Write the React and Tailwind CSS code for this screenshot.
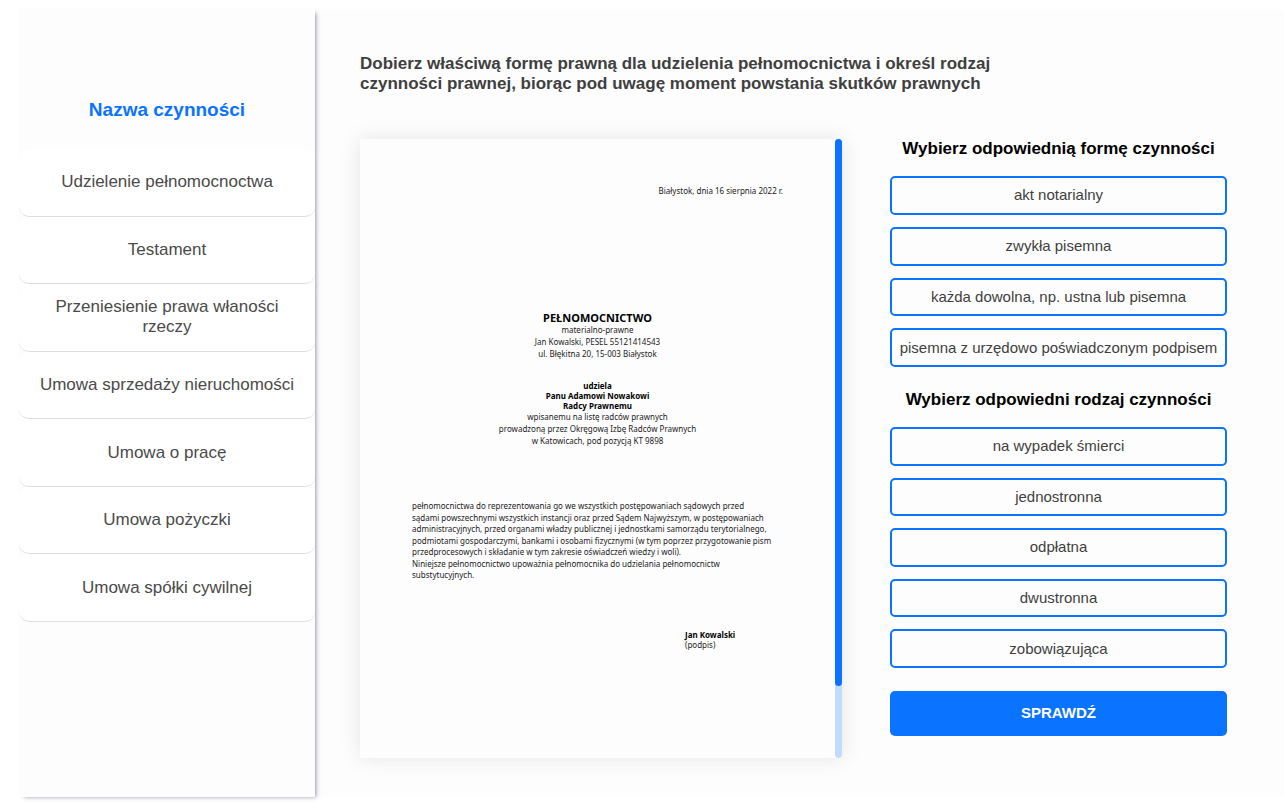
import React, { useState } from 'react'

const activities = [
  'Udzielenie pełnomocnoctwa',
  'Testament',
  'Przeniesienie prawa właności rzeczy',
  'Umowa sprzedaży nieruchomości',
  'Umowa o pracę',
  'Umowa pożyczki',
  'Umowa spółki cywilnej',
]

const forms = [
  'akt notarialny',
  'zwykła pisemna',
  'każda dowolna, np. ustna lub pisemna',
  'pisemna z urzędowo poświadczonym podpisem',
]

const kinds = ['na wypadek śmierci', 'jednostronna', 'odpłatna', 'dwustronna', 'zobowiązująca']

const documentBody = [
  'pełnomocnictwa do reprezentowania go we wszystkich postępowaniach sądowych przed',
  'sądami powszechnymi wszystkich instancji oraz przed Sądem Najwyższym, w postępowaniach',
  'administracyjnych, przed organami władzy publicznej i jednostkami samorządu terytorialnego,',
  'podmiotami gospodarczymi, bankami i osobami fizycznymi (w tym poprzez przygotowanie pism',
  'przedprocesowych i składanie w tym zakresie oświadczeń wiedzy i woli).',
  'Niniejsze pełnomocnictwo upoważnia pełnomocnika do udzielania pełnomocnictw',
  'substytucyjnych.',
]

function Sidebar() {
  return (
    <aside className="z-10 w-[296px] shrink-0 bg-[#fdfdfd] shadow-[3px_2px_4px_-2px_rgba(50,50,80,0.5)]">
      <h2 className="flex h-[140px] items-end justify-center pb-[25px] text-[19px] leading-7 font-bold text-[#0a73ff]">
        Nazwa czynności
      </h2>
      <nav className="flex h-[473px] flex-col">
        {activities.map((name) => (
          <button
            key={name}
            className="flex-1 cursor-pointer rounded-[10px] border-b border-[#dedede] bg-white px-5 text-[17px] leading-5 text-[#4a4a4a]"
          >
            {name}
          </button>
        ))}
      </nav>
    </aside>
  )
}

function Document() {
  const [progress, setProgress] = useState(0)

  const handleScroll = (e) => {
    const { scrollTop, scrollHeight, clientHeight } = e.currentTarget
    setProgress(scrollTop / (scrollHeight - clientHeight))
  }

  return (
    <div className="flex h-[619px] min-w-0 flex-1 bg-[#fdfdfd] shadow-[0_0_20px_rgba(0,0,0,0.1)]">
      <div
        tabIndex={0}
        onScroll={handleScroll}
        className="min-w-0 flex-1 overflow-x-hidden overflow-y-scroll outline-none [scrollbar-width:none]"
      >
        <article className="h-[700px] px-[52px] pt-[46px] font-['Noto_Sans',sans-serif] text-[8px] leading-3 text-[#222]">
          <p className="text-right">Białystok, dnia 16 sierpnia 2022 r.</p>

          <div className="mt-[115px] text-center">
            <h3 className="text-[11px] leading-3 font-bold text-black">PEŁNOMOCNICTWO</h3>
            <p>materialno-prawne</p>
            <p>Jan Kowalski, PESEL 55121414543</p>
            <p>ul. Błękitna 20, 15-003 Białystok</p>
          </div>

          <div className="mt-[21px] text-center">
            <div className="leading-[10px] font-bold text-black">
              <p>udziela</p>
              <p>Panu Adamowi Nowakowi</p>
              <p>Radcy Prawnemu</p>
            </div>
            <p>wpisanemu na listę radców prawnych</p>
            <p>prowadzoną przez Okręgową Izbę Radców Prawnych</p>
            <p>w Katowicach, pod pozycją KT 9898</p>
          </div>

          <div className="mt-[53px] flex h-20 flex-col justify-between leading-[11px] whitespace-nowrap">
            {documentBody.map((line) => (
              <p key={line}>{line}</p>
            ))}
          </div>

          <div className="mt-[50px] ml-auto w-[98px] leading-[10px]">
            <p className="font-bold text-black">Jan Kowalski</p>
            <p>(podpis)</p>
          </div>
        </article>
      </div>
      <div className="w-[7px] shrink-0 rounded-full bg-[#c1dcff]">
        <div
          className="h-[547px] rounded-full bg-[#0a73ff]"
          style={{ transform: `translateY(${progress * 72}px)` }}
        />
      </div>
    </div>
  )
}

function Options({ title, items, selected, onSelect, className }) {
  return (
    <section>
      <h3 className="text-center text-[17px] leading-5 font-bold text-black">{title}</h3>
      <div className={className}>
        {items.map((item) => (
          <button
            key={item}
            aria-pressed={selected === item}
            onClick={() => onSelect(item)}
            className="flex-1 cursor-pointer rounded-[5px] border-2 border-[#0a73ff] text-[15px] leading-5 whitespace-nowrap text-[#3f3f3f] aria-pressed:bg-[#c1dcff]"
          >
            {item}
          </button>
        ))}
      </div>
    </section>
  )
}

export default function App() {
  const [form, setForm] = useState(null)
  const [kind, setKind] = useState(null)

  return (
    <div className="bg-white pt-[9px] pb-[7px] pl-[19px] font-['Liberation_Sans',Arial,sans-serif]">
      <div className="flex bg-[#fdfdfd]">
        <Sidebar />
        <main className="min-w-0 flex-1 pt-[45px] pr-[57px] pb-[39px] pl-[45px]">
          <h1 className="max-w-[640px] text-[17px] leading-5 font-bold text-[#3f3f3f]">
            Dobierz właściwą formę prawną dla udzielenia pełnomocnictwa i określ rodzaj czynności
            prawnej, biorąc pod uwagę moment powstania skutków prawnych
          </h1>
          <div className="mt-[45px] flex gap-12">
            <Document />
            <div className="w-[337px] shrink-0">
              <Options
                title="Wybierz odpowiednią formę czynności"
                items={forms}
                selected={form}
                onSelect={setForm}
                className="mt-[17px] mb-[23px] flex h-[191px] flex-col gap-3"
              />
              <Options
                title="Wybierz odpowiedni rodzaj czynności"
                items={kinds}
                selected={kind}
                onSelect={setKind}
                className="mt-[17px] mb-[23px] flex h-[241px] flex-col gap-3"
              />
              <button className="h-[45px] w-full cursor-pointer rounded-[5px] bg-[#0a73ff] text-[15px] font-bold text-white">
                SPRAWDŹ
              </button>
            </div>
          </div>
        </main>
      </div>
    </div>
  )
}
